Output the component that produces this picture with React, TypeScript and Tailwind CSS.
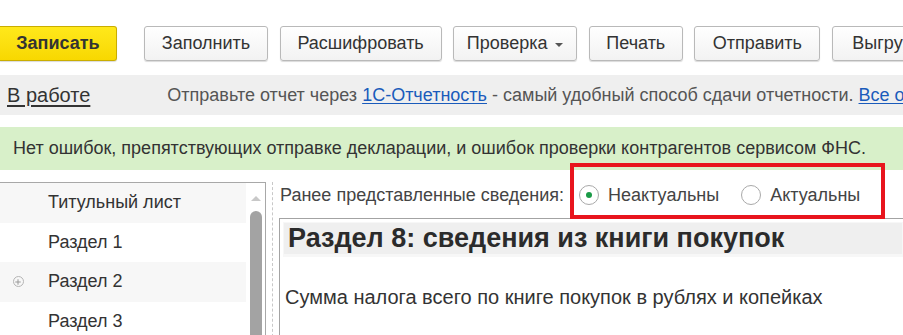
import { Plus } from "lucide-react";

const BUTTONS = [
  { label: "Заполнить", w: "w-[124px]" },
  { label: "Расшифровать", w: "w-[162px]" },
  { label: "Проверка", w: "w-[124px]", menu: true },
  { label: "Печать", w: "w-[94px]" },
  { label: "Отправить", w: "w-[126px]" },
  { label: "Выгрузить", w: "w-[127px]" },
];

const SECTIONS = [
  { label: "Титульный лист", shaded: true },
  { label: "Раздел 1" },
  { label: "Раздел 2", shaded: true, expand: true },
  { label: "Раздел 3" },
];

function ToolButton({ label, w, menu }: { label: string; w: string; menu?: boolean }) {
  return (
    <button
      className={`${w} h-[35px] shrink-0 flex items-center justify-center gap-2 rounded-[3px] border border-[#b9b9b9] bg-gradient-to-b from-white to-[#f2f2f2] text-[18px] text-[#333] shadow-[0_1px_1px_rgba(0,0,0,0.15)]`}
    >
      {label}
      {menu && (
        <span className="mt-[2px] h-0 w-0 border-x-[4px] border-t-[4px] border-x-transparent border-t-[#555]" />
      )}
    </button>
  );
}

export default function App() {
  return (
    <div className="relative h-[335px] w-[903px] overflow-hidden bg-white font-['Liberation_Sans',Arial,sans-serif] text-[#333]">
      {/* Toolbar */}
      <div className="flex items-center gap-[11.6px] pt-[26px]">
        <button className="mr-[15.4px] h-[35px] w-[117px] shrink-0 rounded-r-[3px] border border-l-0 border-[#c9ad00] bg-gradient-to-b from-[#ffe81a] to-[#f8d800] text-[18px] font-bold text-[#333] shadow-[0_1px_1px_rgba(0,0,0,0.15)]">
          Записать
        </button>
        {BUTTONS.map((b) => (
          <ToolButton key={b.label} {...b} />
        ))}
      </div>

      {/* Status line */}
      <div className="mt-[14px] flex h-[40px] items-center whitespace-nowrap bg-[#efefef] pl-[7px]">
        <span className="text-[20px] text-[#333] underline underline-offset-[3px]">В работе</span>
        <span className="ml-[77px] text-[18px] text-[#555]">
          Отправьте отчет через{" "}
          <span className="text-[#1a5bbb] underline underline-offset-2">1С-Отчетность</span>
          {" "}- самый удобный способ сдачи отчетности.{" "}
          <span className="text-[#1a5bbb] underline underline-offset-2">Все о сервисе</span>
        </span>
      </div>

      {/* Check result */}
      <div className="mt-[12px] flex h-[43px] items-center whitespace-nowrap bg-[#d8f0c9] pl-[13px] text-[18px] text-[#333]">
        Нет ошибок, препятствующих отправке декларации, и ошибок проверки контрагентов сервисом ФНС.
      </div>

      {/* Body */}
      <div className="mt-[12px] flex">
        {/* Section tree */}
        <div className="flex h-[160px] w-[266px] shrink-0 border-r border-t border-[#a8a8a8]">
          <div className="w-[246px]">
            {SECTIONS.map((s) => (
              <div
                key={s.label}
                className={`flex h-[39.5px] items-center text-[18px] ${s.shaded ? "bg-[#f7f7f7]" : "bg-white"}`}
              >
                <span className="flex w-[48px] justify-center pr-[12px]">
                  {s.expand && (
                    <span className="flex h-[11px] w-[11px] items-center justify-center rounded-full border border-[#b5b5b5]">
                      <Plus className="h-[8px] w-[8px] text-[#999]" strokeWidth={3} />
                    </span>
                  )}
                </span>
                {s.label}
              </div>
            ))}
          </div>
          <div className="flex w-[19px] flex-col items-center pt-[13px]">
            <span className="h-0 w-0 border-x-[5px] border-b-[5px] border-x-transparent border-b-[#c8c8c8]" />
            <span className="mt-[10px] h-[140px] w-[12px] rounded-t-[6px] bg-[#a3a3a3]" />
          </div>
        </div>

        <div className="ml-[6px] h-[160px] border-l border-dashed border-[#c8c8c8]" />

        {/* Form */}
        <div className="ml-[6px] flex-1">
          <div className="flex h-[36px] items-center whitespace-nowrap pb-[10px] text-[18px] text-[#444]">
            <span className="pl-[1px]">Ранее представленные сведения:</span>
            <label className="ml-[15px] flex items-center gap-[9px]">
              <span className="flex h-[20px] w-[20px] items-center justify-center rounded-full border border-[#a9a9a9] bg-white">
                <span className="h-[6px] w-[6px] rounded-full bg-[#1a9a47]" />
              </span>
              Неактуальны
            </label>
            <label className="ml-[22px] flex items-center gap-[9px]">
              <span className="h-[20px] w-[20px] rounded-full border border-[#a9a9a9] bg-white" />
              Актуальны
            </label>
          </div>
          <div className="h-[130px] border-l border-t border-[#a3a3a3] pl-[3px] pt-[3px]">
            <div className="flex h-[35px] items-center whitespace-nowrap border border-b-[3px] border-[#f7f7f7] bg-[#efefef] pl-[4px] text-[27px] font-bold text-[#2b2b2b]">
              Раздел 8: сведения из книги покупок
            </div>
            <div className="mt-[25px] whitespace-nowrap pl-[2px] text-[20px] text-[#333]">
              Сумма налога всего по книге покупок в рублях и копейках
            </div>
          </div>
        </div>
      </div>

      {/* Annotation frame */}
      <div className="absolute left-[570px] top-[163px] h-[56px] w-[315px] border-[4px] border-[#e8151d]" />
    </div>
  );
}
